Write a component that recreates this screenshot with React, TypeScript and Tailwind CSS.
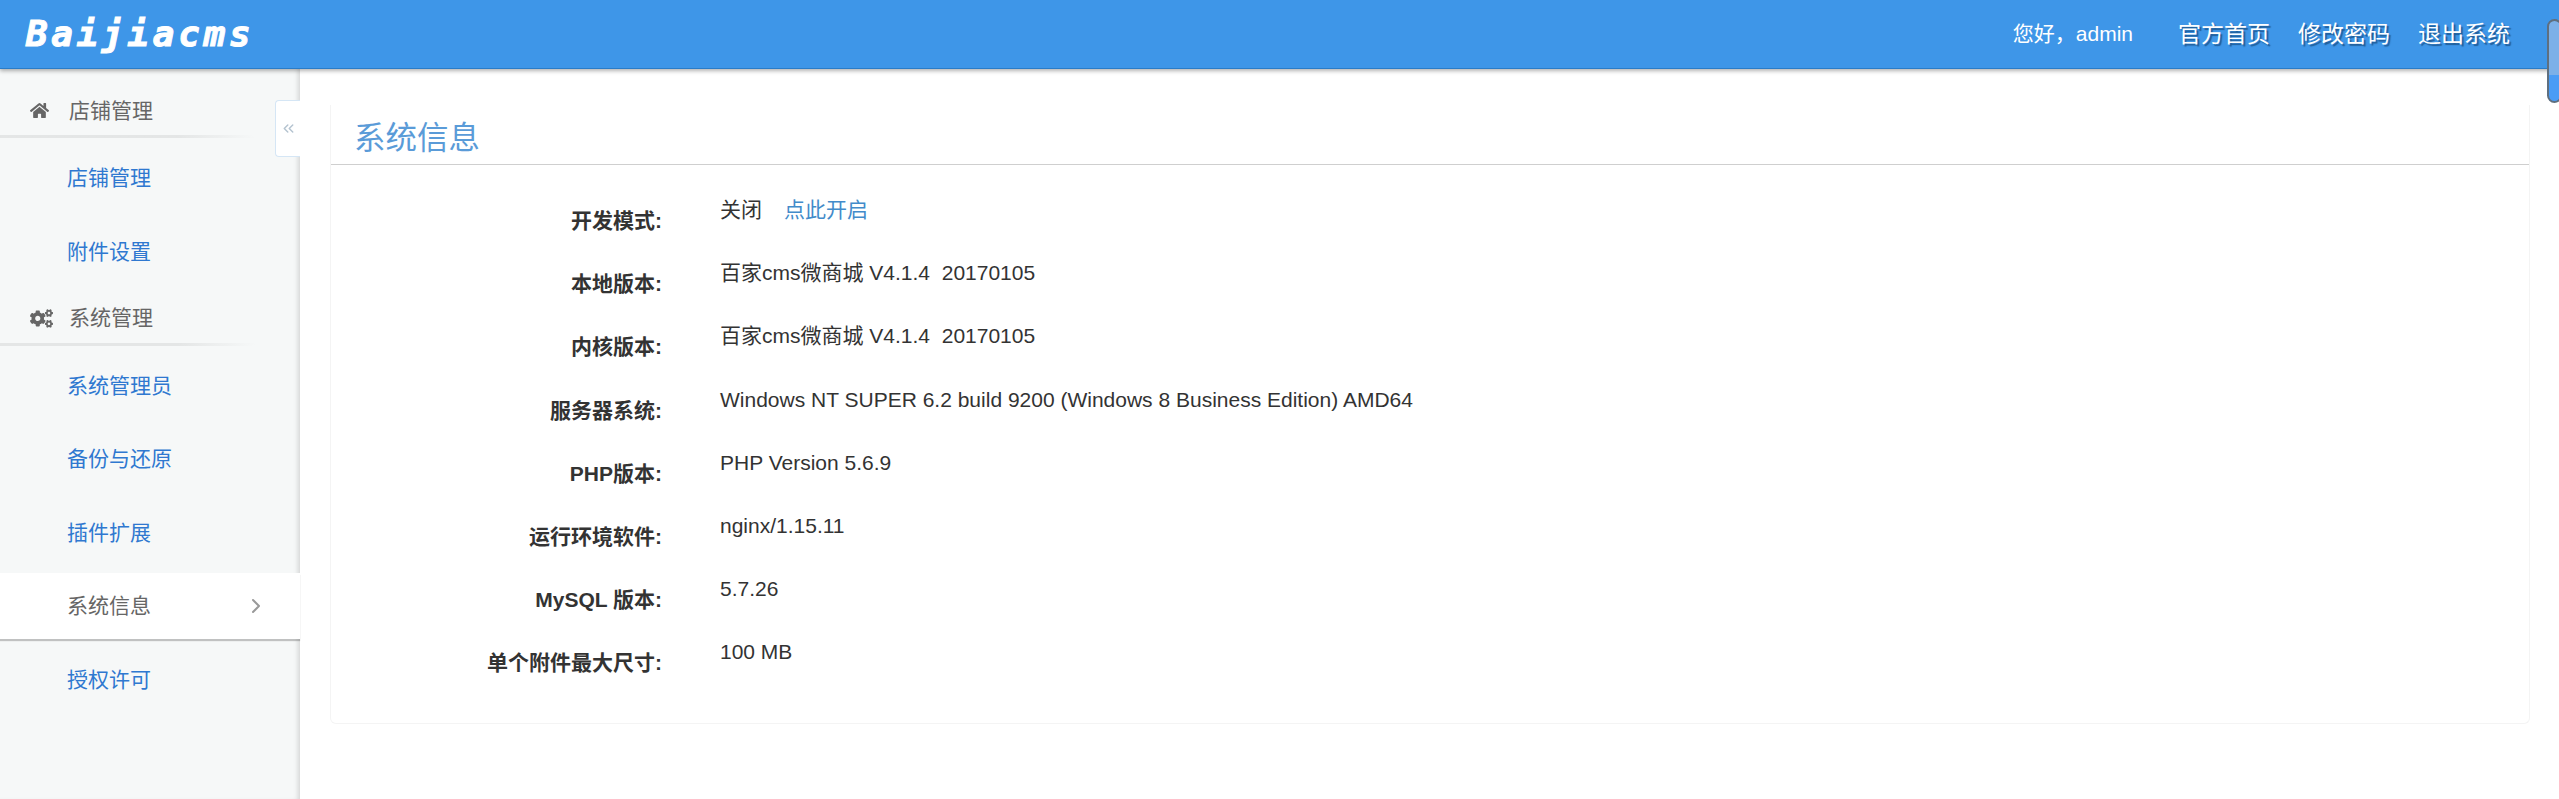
import { FaHome, FaCogs } from 'react-icons/fa'
import { ChevronRight, ChevronsLeft } from 'lucide-react'

const sections = [
  {
    title: '店铺管理',
    icon: <FaHome className="w-[19px] h-[19px]" />,
    items: ['店铺管理', '附件设置'],
  },
  {
    title: '系统管理',
    icon: <FaCogs className="w-[23px] h-[23px]" />,
    items: ['系统管理员', '备份与还原', '插件扩展', '系统信息', '授权许可'],
  },
]

const rows = [
  { label: '本地版本:', value: '百家cms微商城 V4.1.4  20170105' },
  { label: '内核版本:', value: '百家cms微商城 V4.1.4  20170105' },
  { label: '服务器系统:', value: 'Windows NT SUPER 6.2 build 9200 (Windows 8 Business Edition) AMD64' },
  { label: 'PHP版本:', value: 'PHP Version 5.6.9' },
  { label: '运行环境软件:', value: 'nginx/1.15.11' },
  { label: 'MySQL 版本:', value: '5.7.26' },
  { label: '单个附件最大尺寸:', value: '100 MB' },
]

function Row({ label, children }: { label: string; children: React.ReactNode }) {
  return (
    <div className="flex h-[63.2px]">
      <div className="w-[331px] pt-[22px] text-right text-[21px] leading-[28px] font-bold text-[#333]">{label}</div>
      <div className="ml-[58px] pt-[11px] text-[21px] leading-[28px] text-[#333] whitespace-pre">{children}</div>
    </div>
  )
}

export default function App() {
  return (
    <div className="relative h-[799px] overflow-hidden bg-white flex flex-col font-['Liberation_Sans','Noto_Sans_CJK_SC',sans-serif]">
      <header className="relative z-10 h-[69px] shrink-0 flex items-center justify-between bg-[#3e96e8] border-b border-[#2a7cc7] shadow-[0_2px_4px_rgba(0,0,0,0.3)]">
        <div className="ml-[26px] font-['DejaVu_Sans_Mono',monospace] italic font-bold text-[36px] leading-none tracking-[3.7px] text-white [-webkit-text-stroke:1px_white]">
          Baijiacms
        </div>
        <div className="flex items-center mr-[49px] text-white">
          <span className="text-[21px] mr-[45px]">您好，admin</span>
          <nav className="flex gap-[28px] text-[23px] [text-shadow:2px_2px_1px_rgba(20,70,120,0.7)]">
            <a>官方首页</a>
            <a>修改密码</a>
            <a>退出系统</a>
          </nav>
        </div>
      </header>

      <div className="flex-1 flex min-h-0">
        <aside className="relative w-[300px] shrink-0 bg-[#f6f8f8] pt-[8px] shadow-[inset_-5px_0_5px_-3px_rgba(0,0,0,0.14)]">
          <button className="absolute top-[31px] right-0 w-[25px] h-[57px] flex items-center justify-center bg-white border border-r-0 border-[#d5e6f5] rounded-l-[4px] text-[#b4c3d0]">
            <ChevronsLeft className="w-[17px] h-[17px]" strokeWidth={2} />
          </button>
          {sections.map((section) => (
            <div key={section.title}>
              <div className="relative flex items-center h-[61px] pl-[30px] pt-[6px] text-[#666] text-[21px]">
                <span className="w-[39px] flex">{section.icon}</span>
                {section.title}
                <div className="absolute bottom-0 left-0 w-[255px] h-[3px] bg-gradient-to-r from-[#e4e6e6] from-70% to-transparent" />
              </div>
              <div className="flex flex-col gap-[7.5px] pt-[7px]">
                {section.items.map((item) =>
                  item === '系统信息' ? (
                    <div
                      key={item}
                      className="flex items-center justify-between h-[66px] pl-[67px] pr-[32px] bg-white text-[#666] text-[21px] shadow-[0_2px_1px_rgba(0,0,0,0.22)]"
                    >
                      {item}
                      <ChevronRight className="w-[24px] h-[24px] text-[#999]" strokeWidth={2} />
                    </div>
                  ) : (
                    <div key={item} className="flex items-center h-[66px] pl-[67px] text-[#2f78d0] text-[21px]">
                      {item}
                    </div>
                  ),
                )}
              </div>
            </div>
          ))}
        </aside>

        <main className="flex-1 min-w-0 pt-[36px] pl-[30px] pr-[29px]">
          <div className="h-[619px] border border-t-0 border-[#f4f4f4] rounded-b-[6px]">
            <div className="h-[60px] pl-[23px] border-b border-[#cfcfcf] text-[31.5px] leading-[60px] pt-[3px] text-[#5a9bd8]">
              系统信息
            </div>
            <div className="pt-[20px]">
              <Row label="开发模式:">
                <span>关闭</span>
                <span className="ml-[22px] text-[#428bca]">点此开启</span>
              </Row>
              {rows.map((row) => (
                <Row key={row.label} label={row.label}>
                  {row.value}
                </Row>
              ))}
            </div>
          </div>
        </main>
      </div>

      <div className="absolute z-20 top-[19px] -right-[3px] w-[15px] h-[84px] rounded-full border-2 border-[#5f6f7f] bg-gradient-to-b from-[#7cb0e8] from-68% to-[#4a9cf5] to-68%" />
    </div>
  )
}
